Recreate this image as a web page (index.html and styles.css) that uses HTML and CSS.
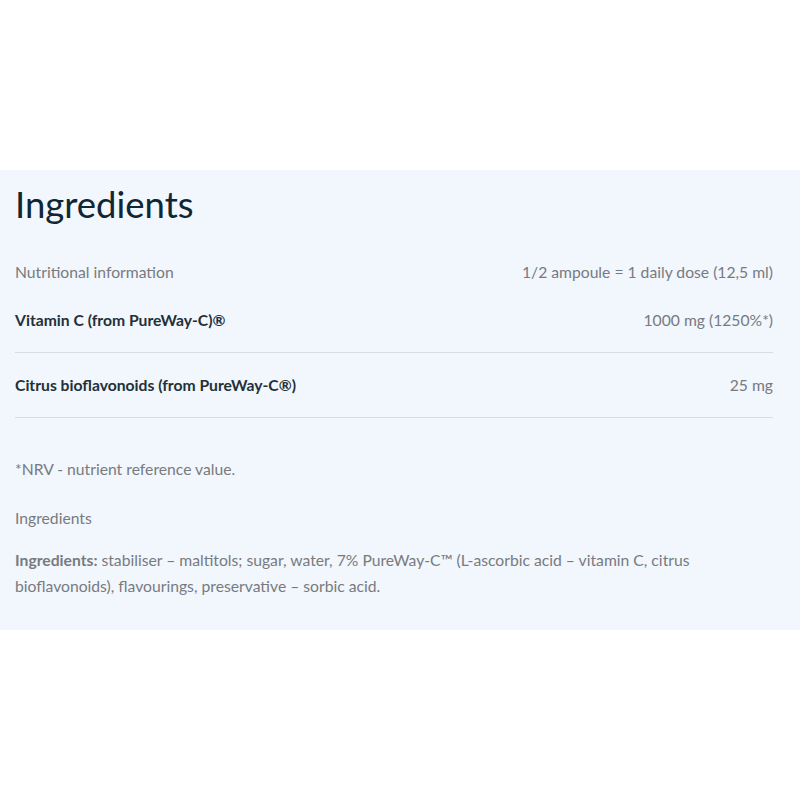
FILE: index.html
```html
<!DOCTYPE html>
<html lang="en">
<head>
  <meta charset="UTF-8">
  <meta name="viewport" content="width=device-width, initial-scale=1.0">
  <title>Ingredients</title>
  <link rel="stylesheet" href="styles.css">
</head>
<body>
  <section class="ingredients">
    <h1>Ingredients</h1>

    <div class="nutrition">
      <div class="row head">
        <span>Nutritional information</span>
        <span>1/2 ampoule = 1 daily dose (12,5 ml)</span>
      </div>
      <div class="row">
        <span class="label">Vitamin C (from PureWay-C)®</span>
        <span>1000 mg (1250%*)</span>
      </div>
      <div class="row">
        <span class="label">Citrus bioflavonoids (from PureWay-C®)</span>
        <span>25 mg</span>
      </div>
    </div>

    <p class="note">*NRV - nutrient reference value.</p>
    <p class="sub">Ingredients</p>
    <p class="list"><b>Ingredients:</b> stabiliser – maltitols; sugar, water, 7% PureWay-C™ (L-ascorbic acid – vitamin C, citrus bioflavonoids), flavourings, preservative – sorbic acid.</p>
  </section>
</body>
</html>
```

FILE: styles.css
```css
body {
  margin: 0;
  padding: 0;
  background-color: #fff;
  font-family: 'Lato', 'Liberation Sans', sans-serif;
  color: #777b80;
}
.ingredients {
  margin-top: 170px;
  background-color: #f2f6fd;
  padding: 14px 27px 31px 15px;
}
h1 {
  margin: 0;
  font-size: 36.5px;
  line-height: 40px;
  font-weight: 400;
  color: #102733;
}
.nutrition {
  margin-top: 36px;
}
.row {
  display: flex;
  justify-content: space-between;
  align-items: center;
  font-size: 15.7px;
  line-height: 24px;
  padding: 20px 0;
  border-bottom: 1px solid #d8dce3;
}
.row.head {
  padding: 0 0 4px;
  border-bottom: none;
}
.label {
  font-weight: 700;
  color: #233038;
}
.note,
.sub,
.list {
  margin: 0;
  font-size: 15.7px;
  line-height: 24px;
}
.note {
  margin-top: 39px;
}
.sub {
  margin-top: 25px;
}
.list {
  margin-top: 17px;
  line-height: 26px;
}
.list b {
  font-weight: 700;
}
```
